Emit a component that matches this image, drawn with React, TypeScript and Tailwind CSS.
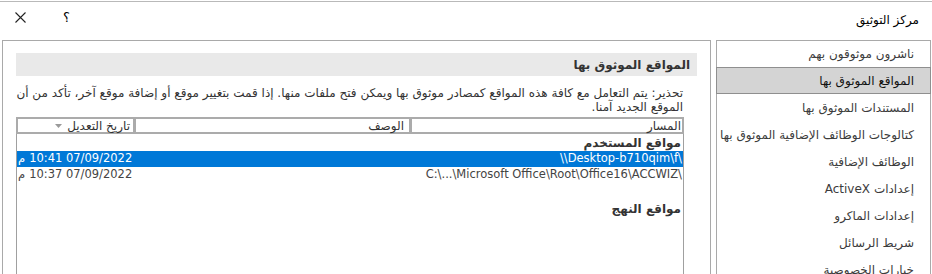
export default function App() {
  const items = [
    "ناشرون موثوقون بهم",
    "المواقع الموثوق بها",
    "المستندات الموثوق بها",
    "كتالوجات الوظائف الإضافية الموثوق بها",
    "الوظائف الإضافية",
    "إعدادات ActiveX",
    "إعدادات الماكرو",
    "شريط الرسائل",
    "خيارات الخصوصية",
  ];
  return (
    <div
      dir="rtl"
      className="w-[932px] h-[274px] overflow-hidden bg-white flex flex-col text-[12px] text-[#333] font-['Tahoma','DejaVu_Sans',sans-serif]"
    >
      <div className="h-px bg-[#b9b9b9] mt-px shrink-0" />
      {/* title bar */}
      <div className="h-[38px] shrink-0 flex items-start justify-between pr-[13px]">
        <span className="pt-[10px] leading-[16px] text-[12px] text-black">مركز التوثيق</span>
        <div dir="ltr" className="flex items-start pl-[15px]">
          <svg width="11" height="11" viewBox="0 0 11 11" className="mt-[10px]">
            <path d="M0.5 0.5 L10.5 10.5 M10.5 0.5 L0.5 10.5" stroke="#222" strokeWidth="1.1" fill="none" />
          </svg>
          <span className="ml-[37px] mt-[8px] leading-[16px] text-[13px] text-black">؟</span>
        </div>
      </div>
      {/* body */}
      <div className="flex-1 min-h-0 flex gap-[5px] pr-px pl-[2px]">
        {/* right nav panel */}
        <div className="w-[215px] shrink-0 border border-b-0 border-[#a9a9a9] flex flex-col">
          {items.map((t, i) => {
            if (i === 1)
              return (
                <div
                  key={t}
                  className="h-[27px] shrink-0 -mx-px bg-[#d4d4d4] border border-[#8f8f8f] flex items-center pr-[16px] text-[#111]"
                >
                  {t}
                </div>
              );
            return (
              <div
                key={t}
                className={`${i === 0 ? "h-[26px]" : "h-[27px]"} shrink-0 flex items-center pr-[16px] text-[#3c3c3c] whitespace-nowrap`}
              >
                {t}
              </div>
            );
          })}
        </div>
        {/* left content panel */}
        <div className="flex-1 min-w-0 border border-b-0 border-[#a9a9a9] flex flex-col px-[13px] pt-[12px]">
          <div className="h-[23px] shrink-0 bg-[#e9e9e9] flex items-center pr-[7px] font-bold text-[#333]">
            المواقع الموثوق بها
          </div>
          <div className="flex-1 min-h-0 flex flex-col pr-[13px]">
            <div className="mt-[10px] leading-[14px] text-[#333] pr-[1px]">
              <div className="whitespace-nowrap">
                تحذير: يتم التعامل مع كافة هذه المواقع كمصادر موثوق بها ويمكن فتح ملفات منها.  إذا قمت بتغيير موقع أو إضافة موقع آخر، تأكد من أن
              </div>
              <div>الموقع الجديد آمنا.</div>
            </div>
            {/* table */}
            <div className="mt-[3px] flex-1 min-h-0 flex flex-col">
              <div className="h-[17px] shrink-0 bg-[#ababab] flex gap-[3px] p-[2px] text-[#333]">
                <div className="w-[270px] shrink-0 bg-white flex items-center pr-[1px] leading-none">المسار</div>
                <div className="w-[273px] shrink-0 bg-white flex items-center pr-[5px] leading-none">الوصف</div>
                <div className="flex-1 bg-white flex items-center gap-[5px] pr-[3px] leading-none">
                  <span>تاريخ التعديل</span>
                  <svg width="7" height="4" viewBox="0 0 7 4">
                    <path d="M0 0 L7 0 L3.5 4 Z" fill="#9a9a9a" />
                  </svg>
                </div>
              </div>
              <div className="flex-1 border-x border-[#a0a0a0] flex flex-col">
                <div className="h-[17px] flex items-center pr-[2px] font-bold text-[#333]">مواقع المستخدم</div>
                <div className="h-[16px] flex items-center justify-between pr-[1px] pl-[1px] bg-[#0078d7] text-white text-[11.5px]">
                  <span dir="ltr">\\Desktop-b710qim\f\</span>
                  <span dir="ltr" className="flex items-center gap-[4px]">
                    <span>م</span>
                    <span>10:41 07/09/2022</span>
                  </span>
                </div>
                <div className="h-[16px] flex items-center justify-between pr-[1px] pl-[1px] text-[#444] text-[11.5px]">
                  <span dir="ltr">C:\...\Microsoft Office\Root\Office16\ACCWIZ\</span>
                  <span dir="ltr" className="flex items-center gap-[4px]">
                    <span>م</span>
                    <span>10:37 07/09/2022</span>
                  </span>
                </div>
                <div className="h-[17px]" />
                <div className="h-[17px] flex items-center pr-[2px] font-bold text-[#333]">مواقع النهج</div>
              </div>
            </div>
          </div>
        </div>
      </div>
    </div>
  );
}
